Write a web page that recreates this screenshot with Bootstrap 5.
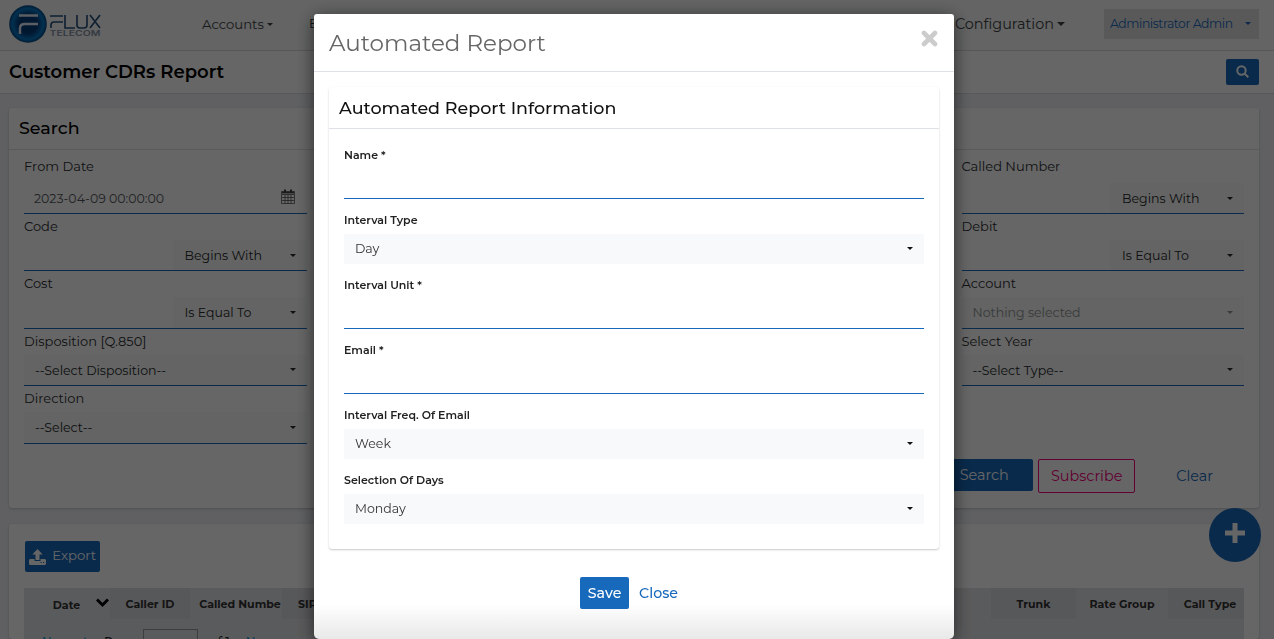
<!DOCTYPE html>
<html lang="en">
<head>
<meta charset="utf-8">
<meta name="viewport" content="width=device-width, initial-scale=1">
<title>Customer CDRs Report</title>
<link href="https://cdn.jsdelivr.net/npm/bootstrap@5.3.0/dist/css/bootstrap.min.css" rel="stylesheet">
<style>
  :root { --brand: #1769bb; --ink: #2b2d30; }
  body { font-family: Montserrat, Inter, sans-serif; font-size: 13px; color: var(--ink); background: #eff1f6; height: 639px; overflow: hidden; line-height: 20px; }
  .topbar { height: 51px; background: #f7faf8; border-bottom: 1px solid #d9d9dc; }
  .brand-logo { margin-left: 8px; width: 96px; height: 42px; margin-top: -2px; }
  .menu-accounts { margin-left: 98px; width: 107px; font-size: 13.2px; color: #3d4146; gap: 3px; padding-bottom: 2px; }
  .menu-config { margin-left: auto; margin-right: 39px; font-size: 14.4px; color: #3d4146; gap: 3px; padding-bottom: 3px; }
  .tri { display: inline-block; border: 4px solid transparent; border-top: 4px solid currentColor; border-bottom: 0; }
  .tri.sm { border-width: 3px; border-top-width: 3px; border-bottom: 0; }
  .user-box { width: 155px; height: 30px; background: #dfdfe1; color: var(--brand); margin-right: 15px; padding: 0 8px 0 6px; white-space: nowrap; font-size: 12.4px; letter-spacing: -.45px; margin-top: -3px; }
  .titlebar { height: 43px; background: #fff; border-bottom: 1px solid #dcdde0; padding: 0 15px 0 9px; }
  .titlebar h1 { font-size: 18.05px; font-weight: 600; margin: 2px 0 0; color: #000; }
  .btn-brand { background: var(--brand); color: #fff; border-radius: 2px; border: 0; }
  .find { width: 33px; height: 26px; margin-top: -1px; }
  .panel { background: #fff; border-radius: 3px; box-shadow: 0 1px 3px rgba(0,0,0,.2); margin: 0 15px 0 9px; }
  .panel-search { margin-top: 14px; height: 400px; }
  .panel-head { height: 42px; border-bottom: 1px solid #dee2e6; padding: 0 10px 1px; font-size: 17.5px; font-weight: 500; color: #000; }
  .filters { --bs-gutter-x: 30px; margin: 0; }
  .filter { height: 57.4px; display: flex; flex-direction: column; }
  .filter > span { height: 26px; padding-top: 2px; }
  .filter.first { height: 64px; }
  .filter.first > span { height: 33px; padding-top: 6px; }
  .entry { height: 31.4px; border-bottom: 1px solid var(--brand); display: flex; font-size: 12.5px; }
  .filter.first .entry { height: 31px; }
  .stamp { color: #55585c; padding: 2px 0 0 10px; }
  .pick { background: #f7faf8; padding: 0 11px; display: flex; align-items: center; justify-content: space-between; flex: 1; color: #25282b; font-size: 12.55px; }
  .filter .pick { padding-top: 1.6px; }
  .filter .tri { margin-bottom: 1.6px; }
  .half { flex: 0 0 134px; margin-left: auto; padding-left: 12px; }
  .actions { height: 34px; margin: 15px 46px 0 0; font-size: 14.4px; }
  .act-search { width: 98px; height: 32px; }
  .act-sub { width: 97px; height: 34px; margin: 0 41px 0 5px; border: 1px solid #f5007c; color: #f5007c; border-radius: 2px; }
  .panel-grid { margin-top: 16px; padding: 17px 15px 0; height: 115px; }
  .export { width: 75px; height: 31px; margin-left: 1px; font-size: 13.2px; }
  .cdr-head { margin-top: 16px; background: #e2e3e6; height: 31px; font-size: 11px; font-weight: 700; color: #333; }
  .cdr-head div { display: flex; align-items: center; justify-content: center; white-space: nowrap; overflow: hidden; }
  .alt { background: #dadcdf; }
  .w-date { width: 86px; padding: 2px 0 0 28px; } .w-cid { width: 80px; } .w-num { width: 92px; } .w-sip { width: 709px; }
  .w-trunk { width: 85px; } .w-rate { width: 92px; } .w-type { width: 76px; }
  .mid { width: 585px; background: #e2e3e6; }
  .pager { background: #e2e3e6; height: 20px; overflow: hidden; padding: 10px 0 0 18px; font-size: 12px; font-weight: 500; color: #00a0e0; }
  .pager span { margin-top: 3px; }
  .pager i { width: 55px; height: 24px; border: 1px solid #999; margin-right: 12px; }
  .fab { position: fixed; left: 1209px; top: 508px; width: 52px; height: 54px; border-radius: 50%; background: var(--brand); }
  .modal-backdrop.show { opacity: .6; }
  .report-modal { padding-right: 6px; }
  .report-dialog { max-width: 640px; margin: 14px auto 0; }
  .report-content { height: 625px; border: 0; border-radius: 3px 3px 5px 5px; box-shadow: 0 4px 18px rgba(0,0,0,.6); background: linear-gradient(#fff 590px, #e9e9e9 624px); }
  .report-head { height: 58px; border-bottom: 1px solid #dee2e6; padding: 0 16px 0 15px; }
  .report-head h2 { font-size: 23px; font-weight: 400; margin: 2px 0 0; color: #666; }
  .info { margin: 15px 15px 0; height: 462px; background: #fff; border-radius: 3px; box-shadow: 0 1px 2px rgba(0,0,0,.22); }
  .info .panel-head { color: #111; padding: 1px 10px 0; }
  .info-body { padding: 15px 15px 0; }
  .field { height: 65px; }
  .field label { display: block; font-size: 11px; font-weight: 600; height: 25px; padding-top: 1px; line-height: 20px; color: #222; }
  .line { height: 30px; border-bottom: 1px solid var(--brand); }
  .field .pick { height: 30px; background: #f8f9fb; color: #333; }
  .field .tri { color: #111; margin-bottom: 1px; }
  .foot { margin-top: 28px; font-size: 14.2px; font-weight: 500; padding-right: 10px; }
  .save { width: 49px; height: 32px; margin-right: 10px; font-weight: 500; }
  .blue { color: var(--brand); }
</style>
</head>
<body>
<header class="topbar d-flex align-items-center">
  <svg class="brand-logo" viewBox="0 0 96 42">
    <defs><radialGradient id="orb"><stop offset=".5" stop-color="#063d78"/><stop offset=".82" stop-color="#0878c8"/><stop offset="1" stop-color="#064681"/></radialGradient></defs>
    <circle cx="20" cy="21" r="18.8" fill="url(#orb)"/>
    <path d="M11 12.5h19M12 31v-6q0-4 5-4h13" fill="none" stroke="#e4eefa" stroke-width="2.4"/>
    <path d="M42 13h13M43 25v-3q0-3 3-3h9M57 12v13h10M69 12v10q0 3 3 3h4q3 0 3-3V12M82 12l10 13M92 12L82 25" fill="none" stroke="#234e78" stroke-width="1.6"/>
    <text x="41.5" y="33.3" font-family="Inter, sans-serif" font-size="7.6" font-weight="600" fill="#8593a8" textLength="51" lengthAdjust="spacingAndGlyphs">TELECOM</text>
  </svg>
  <nav class="d-flex align-items-center flex-grow-1">
    <div class="menu-accounts d-flex align-items-center">Accounts <b class="tri sm"></b></div><span class="pb-1">E</span>
    <div class="menu-config d-flex align-items-center">Configuration <b class="tri"></b></div>
    <div class="user-box d-flex align-items-center justify-content-between">Administrator Admin <b class="tri sm"></b></div>
  </nav>
</header>
<div class="titlebar d-flex align-items-center justify-content-between">
  <h1>Customer CDRs Report</h1>
  <button class="btn-brand find d-flex align-items-center justify-content-center p-0"><svg width="13" height="13" viewBox="0 0 13 13" fill="none" stroke="#fff" stroke-width="2"><circle cx="5.5" cy="5.5" r="4.2"/><path d="M8.6 8.6l3.7 3.7"/></svg></button>
</div>
<main>
  <section class="panel panel-search">
    <div class="panel-head d-flex align-items-center">Search</div>
    <div class="row filters">
      <div class="col-3">
        <div class="filter first"><span>From Date</span><div class="entry align-items-center justify-content-between pe-2"><span class="stamp">2023-04-09 00:00:00</span>
          <svg class="me-1 mb-1" width="14" height="15" viewBox="0 0 14 15" fill="none" stroke="#444" stroke-width=".7"><path d="M.5 2.5h13v12H.5zM1 5.5h12M1 8.5h12M1 11.5h12M4 5.5v9M7 5.5v9M10 5.5v9"/><path d="M1 3.5h12" stroke-width="1.8"/><path d="M4 .5v3M10 .5v3" stroke-width="2"/></svg></div></div>
        <div class="filter"><span>Code</span><div class="entry"><div class="pick half">Begins With <b class="tri sm"></b></div></div></div>
        <div class="filter"><span>Cost</span><div class="entry"><div class="pick half">Is Equal To <b class="tri sm"></b></div></div></div>
        <div class="filter"><span>Disposition [Q.850]</span><div class="entry"><div class="pick">--Select Disposition-- <b class="tri sm"></b></div></div></div>
        <div class="filter"><span>Direction</span><div class="entry"><div class="pick">--Select-- <b class="tri sm"></b></div></div></div>
      </div>
      <div class="col-3 offset-6">
        <div class="filter first"><span>Called Number</span><div class="entry"><div class="pick half">Begins With <b class="tri sm"></b></div></div></div>
        <div class="filter"><span>Debit</span><div class="entry"><div class="pick half">Is Equal To <b class="tri sm"></b></div></div></div>
        <div class="filter"><span>Account</span><div class="entry"><div class="pick"><span class="opacity-50">Nothing selected</span> <b class="tri sm opacity-50"></b></div></div></div>
        <div class="filter"><span>Select Year</span><div class="entry"><div class="pick">--Select Type-- <b class="tri sm"></b></div></div></div>
      </div>
    </div>
    <div class="actions d-flex justify-content-end">
      <button class="btn-brand act-search">Search</button>
      <button class="act-sub bg-transparent p-0">Subscribe</button>
      <span class="blue pt-1 mt-1 lh-sm">Clear</span>
    </div>
  </section>
  <section class="panel panel-grid">
    <button class="btn-brand export d-flex align-items-center justify-content-between p-0 ps-1 pe-1"><svg width="17" height="16" viewBox="0 0 17 16" fill="#fff"><path d="M8.5 0l5.2 5.5h-3.2V11h-4V5.5H3.3zM1 10h4.5v2h6v-2H16l1 1v4l-1 1H1l-1-1v-4z"/><path d="M11.5 13.5h1.2M14 13.5h1.2" stroke="#1769bb"/></svg><span class="pb-1">Export</span></button>
    <div class="cdr-head d-flex">
      <div class="w-date">Date <svg class="ms-3 mb-1" width="13" height="10" viewBox="0 0 13 10"><path d="M1 1.5l5.5 5.5L12 1.5" fill="none" stroke="#000" stroke-width="3"/></svg></div>
      <div class="w-cid alt">Caller ID</div><div class="w-num ps-2">Called Numbe</div><div class="w-sip alt justify-content-start ps-3">SIP User<span class="mid ms-auto h-100"></span></div>
      <div class="w-trunk alt">Trunk</div><div class="w-rate">Rate Group</div><div class="w-type alt ps-2">Call Type</div>
    </div>
    <div class="pager d-flex"><span class="pe-3">Newest</span><span class="text-body pe-2">Page</span><i></i><span class="text-body pe-3">of 1</span><span>Newer</span></div>
  </section>
</main>
<button class="fab border-0 d-flex align-items-center justify-content-center p-0 pb-1"><svg width="20" height="20" viewBox="0 0 20 20"><path d="M10 2v16M2 10h16" stroke="#fff" stroke-width="5" stroke-linecap="square"/></svg></button>

<div class="modal-backdrop show"></div>
<div class="modal report-modal show d-block overflow-hidden" role="dialog">
  <div class="modal-dialog report-dialog">
    <div class="modal-content report-content">
      <div class="report-head d-flex align-items-center justify-content-between">
        <h2>Automated Report</h2>
        <svg class="mb-2" width="17" height="17" viewBox="0 0 17 17"><path d="M3 3l11 11M14 3L3 14" stroke="#ccc" stroke-width="4.6" stroke-linecap="round"/></svg>
      </div>
      <div class="info">
        <div class="panel-head d-flex align-items-center">Automated Report Information</div>
        <div class="info-body">
          <div class="field"><label>Name *</label><div class="line"></div></div>
          <div class="field"><label>Interval Type</label><div class="pick">Day <b class="tri sm"></b></div></div>
          <div class="field"><label>Interval Unit *</label><div class="line"></div></div>
          <div class="field"><label>Email *</label><div class="line"></div></div>
          <div class="field"><label>Interval Freq. Of Email</label><div class="pick">Week <b class="tri sm"></b></div></div>
          <div class="field"><label>Selection Of Days</label><div class="pick">Monday <b class="tri sm"></b></div></div>
        </div>
      </div>
      <div class="foot d-flex justify-content-center align-items-center"><button class="btn-brand save p-0">Save</button><span class="blue">Close</span></div>
    </div>
  </div>
</div>
<script src="https://cdn.jsdelivr.net/npm/bootstrap@5.3.0/dist/js/bootstrap.bundle.min.js"></script>
</body>
</html>
